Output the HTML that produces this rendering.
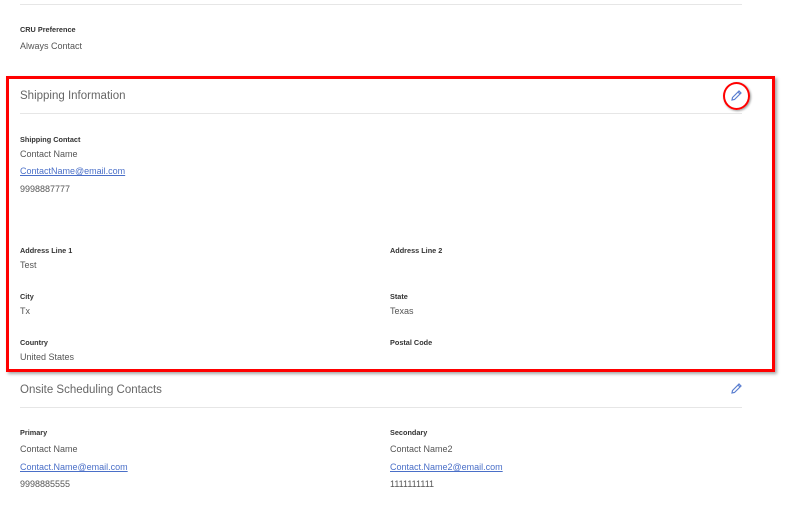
<!DOCTYPE html>
<html><head><meta charset="utf-8"><style>
*{margin:0;padding:0;box-sizing:border-box}
body{width:800px;height:530px;background:#fff;font-family:"Liberation Sans",Arial,sans-serif;position:relative;overflow:hidden}
.a{position:absolute;white-space:nowrap}
.l{font-size:7.3px;font-weight:bold;color:#333}
.v{font-size:9px;color:#555}
.lk{font-size:9px;color:#4a6fc8;text-decoration:underline}
.h{font-size:11.5px;color:#666}
.hr{position:absolute;height:1px;background:#e6e6e6;left:20px;width:722px}
</style></head><body>
<div class="hr" style="top:4px"></div>
<div class="a l" style="left:20px;top:25px">CRU Preference</div>
<div class="a v" style="left:20px;top:41px">Always Contact</div>

<div style="position:absolute;left:6px;top:76px;width:769px;height:296px;border:3px solid #f00;box-shadow:2px 2px 3px rgba(0,0,0,.35)"></div>
<div class="a h" style="left:20px;top:90px">Shipping Information</div>
<div class="hr" style="top:113px"></div>
<div style="position:absolute;left:723px;top:82px;width:27px;height:28px;border:2px solid #f00;border-radius:50%;box-shadow:1px 1px 2px rgba(0,0,0,.4)"></div>
<svg class="a" style="left:730px;top:89px" width="13" height="13" viewBox="0 0 13 13"><path d="M2 11 L2.5 8.5 L9 2 L11 4 L4.5 10.5 Z M8 3 L10 5" fill="none" stroke="#5b7fd0" stroke-width="1.2"/></svg>

<div class="a l" style="left:20px;top:135px">Shipping Contact</div>
<div class="a v" style="left:20px;top:149px">Contact Name</div>
<div class="a lk" style="left:20px;top:166px">ContactName@email.com</div>
<div class="a v" style="left:20px;top:184px">9998887777</div>

<div class="a l" style="left:20px;top:246px">Address Line 1</div>
<div class="a v" style="left:20px;top:260px">Test</div>
<div class="a l" style="left:390px;top:246px">Address Line 2</div>
<div class="a l" style="left:20px;top:292px">City</div>
<div class="a v" style="left:20px;top:306px">Tx</div>
<div class="a l" style="left:390px;top:292px">State</div>
<div class="a v" style="left:390px;top:306px">Texas</div>
<div class="a l" style="left:20px;top:338px">Country</div>
<div class="a v" style="left:20px;top:352px">United States</div>
<div class="a l" style="left:390px;top:338px">Postal Code</div>

<div class="a h" style="left:20px;top:384px">Onsite Scheduling Contacts</div>
<svg class="a" style="left:730px;top:382px" width="13" height="13" viewBox="0 0 13 13"><path d="M2 11 L2.5 8.5 L9 2 L11 4 L4.5 10.5 Z M8 3 L10 5" fill="none" stroke="#5b7fd0" stroke-width="1.2"/></svg>
<div class="hr" style="top:407px"></div>
<div class="a l" style="left:20px;top:428px">Primary</div>
<div class="a v" style="left:20px;top:444px">Contact Name</div>
<div class="a lk" style="left:20px;top:462px">Contact.Name@email.com</div>
<div class="a v" style="left:20px;top:479px">9998885555</div>
<div class="a l" style="left:390px;top:428px">Secondary</div>
<div class="a v" style="left:390px;top:444px">Contact Name2</div>
<div class="a lk" style="left:390px;top:462px">Contact.Name2@email.com</div>
<div class="a v" style="left:390px;top:479px">1111111111</div>
</body></html>
